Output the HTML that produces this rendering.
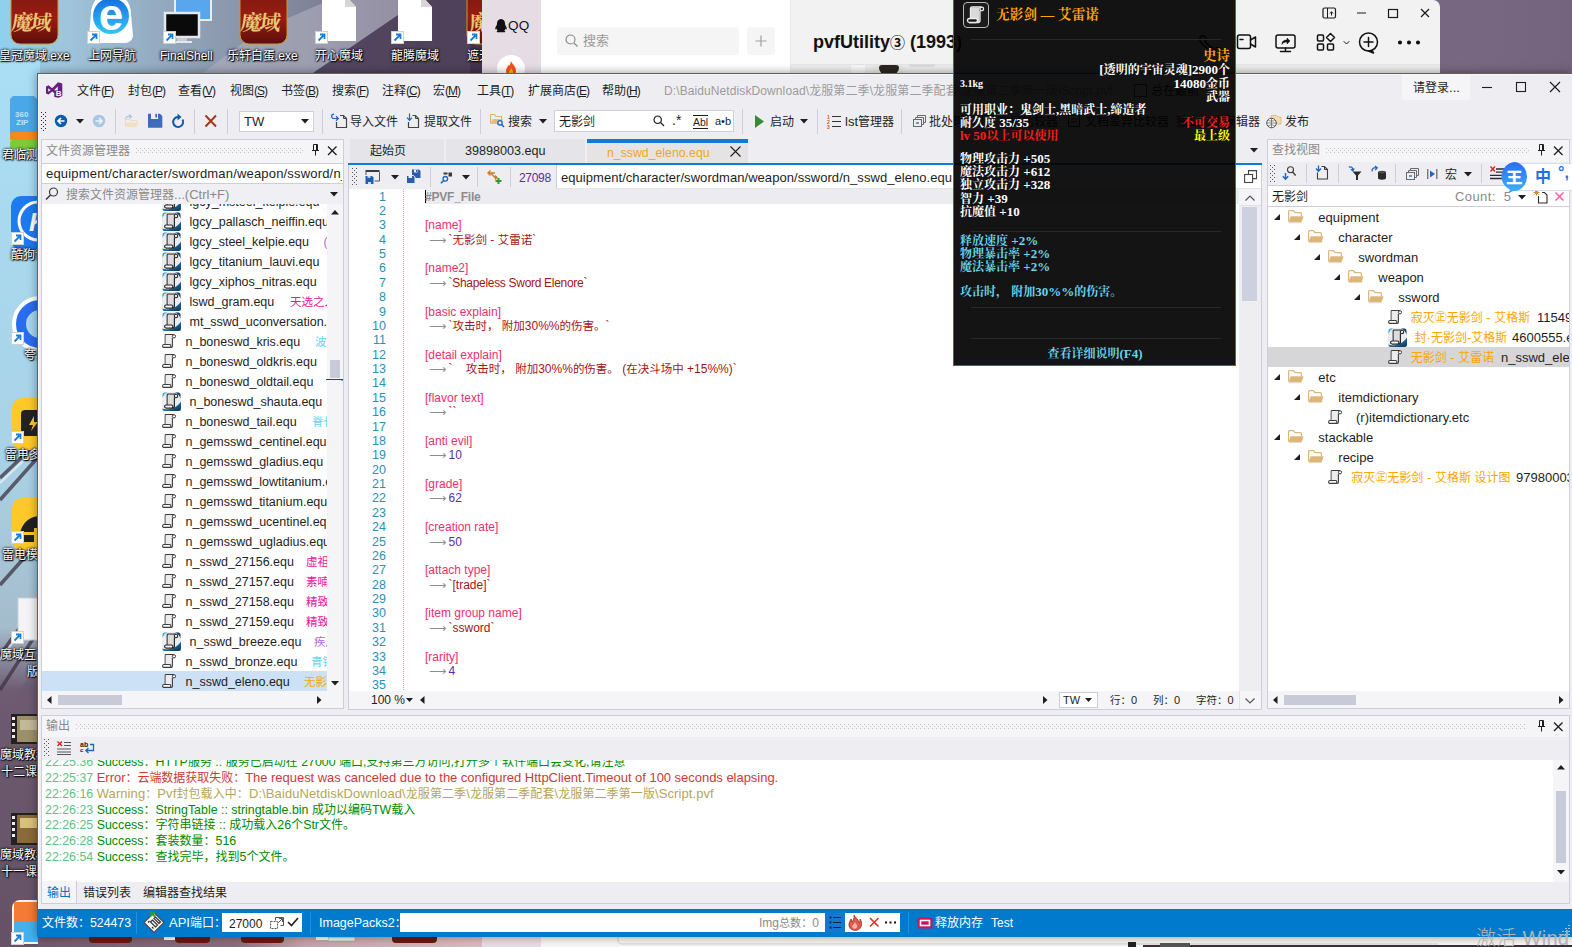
<!DOCTYPE html>
<html lang="zh-CN">
<head>
<meta charset="utf-8">
<title>pvfUtility</title>
<style>
*{box-sizing:border-box;margin:0;padding:0}
html,body{width:1572px;height:947px;overflow:hidden}
body{position:relative;font-family:"Liberation Sans","Noto Sans CJK SC",sans-serif;font-size:13px;color:#1e1e1e;background:#6b5a72;line-height:1}
.c{font-size:.9231em}
.k .c,.dl .c{font-size:1em}
.mk{font-size:12px;letter-spacing:-1px}
.a{position:absolute}
.t{position:absolute;white-space:pre;line-height:16px;height:16px}
svg{position:absolute;overflow:visible}
/* desktop */
#desk{position:absolute;left:0;top:0;width:1572px;height:947px;background:
 linear-gradient(90deg,#8fd0ee 0px,#9fc6dd 60px,#8f9fb4 200px,#7d7f93 330px,#5f4c63 470px,#4a3a52 700px,#6a5a74 1000px,#7d6c86 1300px,#75647e 1572px)}
.dl{position:absolute;color:#fff;font-size:12px;white-space:pre;text-shadow:1px 1px 1px #000,0 0 2px #000,0 0 3px #000;line-height:16px}
.sc{position:absolute;width:11px;height:11px;background:#fff;border:1px solid #d8d8d8}
.sc:after{content:"";position:absolute;left:2px;top:2px;width:5px;height:5px;border-top:2px solid #1a7fd8;border-right:2px solid #1a7fd8}
/* main window */
#win{position:absolute;left:38px;top:73px;width:1534px;height:864px;background:#eeeef2;border-top:1px solid #0078d7;border-left:1px solid #0078d7}
.sep{position:absolute;width:1px;height:22px;background:#ccceDB}
.pan{position:absolute;background:#f5f5f7;border:1px solid #ccceDB}
.ph{position:absolute;color:#8a8a8a;white-space:pre;line-height:16px}
.grip{position:absolute;height:5px;background:linear-gradient(90deg,#c2c4d0 1px,transparent 1px) 0 0/4px 1px repeat-x,linear-gradient(90deg,#c2c4d0 1px,transparent 1px) 2px 2px/4px 1px repeat-x,linear-gradient(90deg,#c2c4d0 1px,transparent 1px) 0 4px/4px 1px repeat-x}
.ar{color:#8c8c8c;padding:0 2.300px 0 4px;font-family:'DejaVu Sans',sans-serif;font-size:12px;line-height:0}
#ed .c{font-size:11.500px}
.c11 .c{font-size:10.500px}
#ltree .t{font-size:12.500px;margin-top:1px}
.lg{left:3px;font-size:12.400px}
.lg .c{font-size:12px}
.lg .bg{font-size:13px}
.lg i{font-style:normal;color:#62c084}
.w{color:#fff}
#tip .c{font-size:12px}
#tip .k .c{font-size:1em}
.tt{position:absolute;white-space:pre;line-height:16px;height:16px}
.tt.r{right:5px;text-align:right}
.hr{position:absolute;left:16px;width:250px;height:1px;background:#282828}
</style>
</head>
<body>
<div id="desk">
<!-- wallpaper accents -->
<svg width="1572" height="947" viewBox="0 0 1572 947" style="left:0;top:0">
 <defs>
  <linearGradient id="wl" x1="0" y1="0" x2="0" y2="1"><stop offset="0" stop-color="#a9def5"/><stop offset="0.45" stop-color="#a9d2e6"/><stop offset="0.64" stop-color="#a4bccc"/><stop offset="0.71" stop-color="#6f5c72"/><stop offset="1" stop-color="#5b4658"/></linearGradient>
  <linearGradient id="mo" x1="0" y1="0" x2="0" y2="1"><stop offset="0" stop-color="#7b1a10"/><stop offset="0.5" stop-color="#9c1c12"/><stop offset="1" stop-color="#5d0f0a"/></linearGradient>
  <symbol id="sct" viewBox="0 0 13 13"><rect x=".5" y=".5" width="12" height="12" fill="#fff" stroke="#d0d0d0" stroke-width="1"/><path d="M3.500 9.500L9 4M5 3.500h4.500V8" fill="none" stroke="#1a7fd8" stroke-width="1.800"/></symbol>
  <linearGradient id="ie" x1="0" y1="0" x2="0" y2="1"><stop offset="0" stop-color="#1470e0"/><stop offset="1" stop-color="#35c4f5"/></linearGradient>
 </defs>
 <rect x="0" y="60" width="40" height="887" fill="url(#wl)"/>
 <path d="M0 478L40 440M0 500L40 455M0 585L40 540M0 655L40 600M0 690L40 628" stroke="#3f3342" stroke-width="3.500" opacity=".75" fill="none"/><path d="M0 483L40 445M0 660L40 605" stroke="#f4f4f8" stroke-width="2" opacity=".7" fill="none"/>
 <path d="M0 720 L40 660 L40 947 L0 947Z" fill="#6c5a70" opacity=".6"/>
 <path d="M200 75 L260 30 L330 0 L470 0 L470 75Z" fill="#b5b3c2" opacity=".55"/>
 <path d="M310 75 L420 0 L482 0 L482 75Z" fill="#3b2a45" opacity=".75"/>
</svg>
<!-- top row icons -->
<svg width="50" height="44" style="left:10px;top:0"><rect x="1" y="-8" width="47" height="52" rx="9" fill="url(#mo)" stroke="#c79a2a" stroke-width="1"/><text x="24" y="30" font-size="21" font-weight="bold" fill="#e9c772" text-anchor="middle" font-family="'Liberation Serif','Noto Serif CJK SC',serif" transform="skewX(-8)" letter-spacing="-2">魔域</text></svg>
<svg width="50" height="44" style="left:239px;top:0"><rect x="1" y="-8" width="47" height="52" rx="9" fill="url(#mo)" stroke="#c79a2a" stroke-width="1"/><text x="24" y="30" font-size="21" font-weight="bold" fill="#e9c772" text-anchor="middle" font-family="'Liberation Serif','Noto Serif CJK SC',serif" transform="skewX(-8)" letter-spacing="-2">魔域</text></svg>
<svg width="20" height="44" style="left:466px;top:0"><rect x="1" y="-8" width="47" height="52" rx="9" fill="url(#mo)" stroke="#c79a2a" stroke-width="1"/><text x="14" y="30" font-size="21" font-weight="bold" fill="#e9c772" text-anchor="middle" font-family="'Liberation Serif','Noto Serif CJK SC',serif">魔</text></svg>
<svg width="48" height="44" style="left:87px;top:0"><path d="M4 14 A20 22 0 0 1 44 14 L46 36 A8 8 0 0 1 38 43 L10 43 A8 8 0 0 1 2 36Z" fill="#fff"/><circle cx="24" cy="16" r="18" fill="url(#ie)"/><text x="24" y="30" font-size="44" font-weight="bold" fill="#fff" text-anchor="middle" font-family="'Liberation Sans',sans-serif">e</text></svg>
<svg width="50" height="44" style="left:163px;top:0"><rect x="12" y="-6" width="36" height="26" fill="#5aa6ec" stroke="#e8eef5" stroke-width="2"/><rect x="26" y="20" width="10" height="4" fill="#cfd6de"/><rect x="2" y="13" width="34" height="24" fill="#0a0a0a" stroke="#e4e8ec" stroke-width="2.5"/><rect x="14" y="38" width="10" height="3" fill="#c8ced6"/><rect x="9" y="41" width="20" height="2" fill="#e4e8ec"/></svg>
<svg width="36" height="44" style="left:322px;top:0"><path d="M0 -5 L23 -5 L34 7 L34 41 L0 41Z" fill="#fff"/><path d="M23 -5 L23 7 L34 7Z" fill="#d6d6d6"/></svg>
<svg width="36" height="44" style="left:398px;top:0"><path d="M0 -5 L23 -5 L34 7 L34 41 L0 41Z" fill="#fff"/><path d="M23 -5 L23 7 L34 7Z" fill="#d6d6d6"/></svg>
<svg width="13" height="13" style="left:87px;top:31px"><use href="#sct"/></svg><svg width="13" height="13" style="left:163px;top:31px"><use href="#sct"/></svg><svg width="13" height="13" style="left:315px;top:31px"><use href="#sct"/></svg><svg width="13" height="13" style="left:391px;top:31px"><use href="#sct"/></svg><svg width="13" height="13" style="left:467px;top:31px"><use href="#sct"/></svg>
<div class="dl" style="left:-1px;top:48px"><span class="c">皇冠魔域</span>.exe</div>
<div class="dl" style="left:88px;top:48px"><span class="c">上网导航</span></div>
<div class="dl" style="left:160px;top:48px">FinalShell</div>
<div class="dl" style="left:227px;top:48px"><span class="c">乐轩白蛋</span>.exe</div>
<div class="dl" style="left:315px;top:48px"><span class="c">开心魔域</span></div>
<div class="dl" style="left:391px;top:48px"><span class="c">龍腾魔域</span></div>
<div class="dl" style="left:467px;top:48px"><span class="c">遮天</span></div>
<!-- left column icons -->
<svg width="30" height="56" style="left:10px;top:96px"><path d="M3 0 L24 0 L30 6 L30 40 L0 40 L0 3Z" fill="#4aa8e8"/><rect x="0" y="36" width="30" height="9" rx="3" fill="#f58a1e"/><rect x="0" y="44" width="30" height="9" rx="3" fill="#7ccb3a"/><text x="5" y="21" font-size="8" fill="#bfe3fa" font-family="'Liberation Sans',sans-serif" font-weight="bold">360</text><text x="6" y="29" font-size="8" fill="#bfe3fa" font-family="'Liberation Sans',sans-serif" font-weight="bold">ZIP</text></svg>
<div class="dl" style="left:2px;top:147px"><span class="c">君临测试</span></div>
<svg width="30" height="56" style="left:10px;top:196px"><rect x="1" y="0" width="40" height="54" rx="10" fill="#1e7af0"/><circle cx="28" cy="25" r="19" fill="none" stroke="#fff" stroke-width="3"/><text x="19" y="35" font-size="26" font-weight="bold" font-style="italic" fill="#fff" font-family="'Liberation Sans',sans-serif">K</text></svg>
<svg width="13" height="13" style="left:11px;top:232px"><use href="#sct"/></svg>
<div class="dl" style="left:11px;top:247px"><span class="c">酷狗音乐</span></div>
<svg width="30" height="56" style="left:10px;top:296px"><circle cx="30" cy="28" r="22" fill="none" stroke="#fff" stroke-width="12"/><circle cx="30" cy="28" r="19" fill="none" stroke="#2a6cf0" stroke-width="10"/></svg>
<svg width="13" height="13" style="left:11px;top:332px"><use href="#sct"/></svg>
<div class="dl" style="left:24px;top:347px"><span class="c">夸克</span></div>
<svg width="30" height="56" style="left:12px;top:398px"><rect x="0" y="0" width="50" height="52" rx="10" fill="#fdc82a"/><rect x="9" y="12" width="36" height="26" rx="4" fill="#222"/><path d="M22 18 L17 27 L21 27 L19 33 L26 24 L22 24Z" fill="#fdc82a"/></svg>
<svg width="13" height="13" style="left:11px;top:431px"><use href="#sct"/></svg>
<div class="dl" style="left:5px;top:447px"><span class="c">雷电多开器</span></div>
<svg width="30" height="56" style="left:12px;top:498px"><rect x="0" y="0" width="50" height="52" rx="10" fill="#fdc82a"/><path d="M8 38 A20 20 0 0 1 44 26 L44 44 L8 44Z" fill="#222"/><rect x="8" y="34" width="36" height="3" fill="#fdc82a"/><rect x="22" y="30" width="3" height="14" fill="#fdc82a"/></svg>
<svg width="13" height="13" style="left:11px;top:531px"><use href="#sct"/></svg>
<div class="dl" style="left:2px;top:547px"><span class="c">雷电模拟器</span></div>
<svg width="30" height="46" style="left:18px;top:598px"><rect x="0" y="0" width="30" height="42" fill="#f4f4f6" stroke="#d0d0d4"/></svg>
<svg width="13" height="13" style="left:11px;top:631px"><use href="#sct"/></svg>
<div class="dl" style="left:0px;top:647px"><span class="c">魔域互通</span></div>
<div class="dl" style="left:27px;top:664px"><span class="c">版</span></div>
<svg width="30" height="34" style="left:11px;top:714px"><rect x="0" y="0" width="30" height="30" fill="#222"/><rect x="6" y="2" width="24" height="26" fill="#9c8f6a"/><rect x="9" y="6" width="21" height="10" fill="#c2b89a"/><path d="M1 3h3v3h-3zM1 9h3v3h-3zM1 15h3v3h-3zM1 21h3v3h-3z" fill="#eee"/></svg>
<div class="dl" style="left:0px;top:747px"><span class="c">魔域教程</span></div>
<div class="dl" style="left:1px;top:764px"><span class="c">十二课</span></div>
<svg width="30" height="34" style="left:11px;top:813px"><rect x="0" y="0" width="30" height="32" fill="#222"/><rect x="6" y="2" width="24" height="28" fill="#8a6a3a"/><rect x="9" y="5" width="21" height="10" fill="#d8c27a"/><path d="M1 3h3v3h-3zM1 9h3v3h-3zM1 15h3v3h-3zM1 21h3v3h-3z" fill="#eee"/></svg>
<div class="dl" style="left:0px;top:847px"><span class="c">魔域教程</span></div>
<div class="dl" style="left:1px;top:864px"><span class="c">十一课</span></div>
<svg width="40" height="50" style="left:12px;top:900px"><rect x="0" y="0" width="44" height="44" rx="8" fill="#f4f4f4"/><rect x="2" y="2" width="30" height="20" fill="#f47b35"/><rect x="2" y="22" width="30" height="20" fill="#41b2ee"/><rect x="32" y="2" width="12" height="20" fill="#7cc142"/><rect x="32" y="22" width="12" height="20" fill="#f5c332"/></svg>
<svg width="13" height="13" style="left:11px;top:932px"><use href="#sct"/></svg>
<!-- strip below window -->
<svg width="1534" height="10" style="left:38px;top:937px"><defs><linearGradient id="sb" x1="0" y1="0" x2="1" y2="0"><stop offset="0" stop-color="#6f5a70"/><stop offset="0.45" stop-color="#8a6f80"/><stop offset="0.6" stop-color="#c3a3ac"/><stop offset="1" stop-color="#d9bcc2"/></linearGradient></defs><rect x="0" y="0" width="445" height="10" fill="url(#sb)"/><rect x="51" y="-4" width="43" height="10" rx="4" fill="#6a1818"/><rect x="137" y="-4" width="35" height="10" rx="4" fill="#6a1818"/><rect x="203" y="-4" width="43" height="10" rx="4" fill="#6a1818"/><rect x="290" y="0" width="27" height="4" fill="#f2f2f2" stroke="#999" stroke-width=".6"/><rect x="354" y="-4" width="45" height="10" rx="4" fill="#6a1818"/><rect x="126" y="0" width="11" height="3" fill="#fff"/><rect x="278" y="0" width="12" height="3" fill="#fff"/><rect x="444" y="0" width="59" height="10" fill="#e6dde4"/><rect x="503" y="0" width="1031" height="10" fill="#f6f6f6"/><path d="M580 0V3Q580 7 585 7H1400" fill="none" stroke="#d0d0d0" stroke-width="1"/><rect x="1105" y="8" width="429" height="2" fill="#3a3038"/><rect x="1090" y="5" width="8" height="5" fill="#222"/><rect x="1122" y="6" width="30" height="4" fill="#555"/></svg>
</div>
<!-- QQ window behind -->
<div class="a" id="qq" style="left:482px;top:0;width:958px;height:80px;background:#f2f2f2;border-top-right-radius:7px;overflow:hidden">
 <div class="a" style="left:0;top:0;width:59px;height:80px;background:#e6dde4"></div>
 <div class="a" style="left:59px;top:0;width:250px;height:80px;background:#fff;border-right:1px solid #e9e9e9"></div>
 <svg width="16" height="16" style="left:11px;top:18px" viewBox="0 0 16 16"><path d="M8 1C5.2 1 4 3.2 4 5.5c0 .8-.1 1.300-.5 2C2.600 9 2 10.200 2.300 11.300c.3.500.8-.1 1.200-.7.100.9.500 1.600 1.200 2.200-.6.200-1.100.6-1 1 .1.600 1.400.6 2.600.4.600.1 1.100.1 1.700.1s1.100 0 1.700-.1c1.200.2 2.500.2 2.600-.4.100-.4-.4-.8-1-1 .7-.6 1.100-1.300 1.200-2.200.4.600.9 1.200 1.200.7.300-1.100-.3-2.300-1.200-3.800-.4-.7-.5-1.200-.5-2C12 3.200 10.800 1 8 1z" fill="#111"/></svg>
 <div class="t" style="left:26px;top:18px;font-size:13.500px;color:#111;letter-spacing:.2px">QQ</div>
 <svg width="28" height="30" style="left:15px;top:55px"><circle cx="14" cy="14" r="14" fill="#fff"/><path d="M14 6c1 3 5 5 5 10a5 5 0 0 1-10 0c0-3 2-4 2-6 1 1 2 1 3-4z" fill="#f4511e"/><path d="M14 13c1 2 2.500 2.500 2.500 5a2.500 2.500 0 0 1-5 0c0-1.500 1.500-2 2.500-5z" fill="#ffb300"/></svg>
 <div class="a" style="left:75px;top:27px;width:182px;height:28px;background:#f5f5f5;border-radius:4px"></div>
 <svg width="14" height="14" style="left:83px;top:34px" viewBox="0 0 14 14"><circle cx="5.500" cy="5.500" r="4.500" fill="none" stroke="#8c8c8c" stroke-width="1.200"/><path d="M9 9l3.500 3.500" stroke="#8c8c8c" stroke-width="1.200"/></svg>
 <div class="t k" style="left:101px;top:33px;color:#9a9a9a;font-size:13px"><span class="c">搜索</span></div>
 <div class="a" style="left:265px;top:27px;width:28px;height:28px;background:#f5f5f5;border-radius:4px"></div>
 <svg width="12" height="12" style="left:273px;top:35px"><path d="M6 .5v11M.5 6h11" stroke="#a0a0a0" stroke-width="1.200"/></svg>
 <div class="t" style="left:331px;top:31px;font-size:18px;font-weight:bold;color:#111;line-height:22px;height:22px;letter-spacing:0">pvfUtility<span style="font-size:15px">③</span> (1993)</div>
 <div class="a" style="left:309px;top:64px;width:649px;height:1px;background:#e6e6e6"></div>
 <div class="a" style="left:309px;top:65px;width:649px;height:15px;background:#ededed"></div>
 <div class="a" style="left:369px;top:65px;width:14px;height:10px;background:#f8f8f8"></div>
 <div class="a" style="left:391px;top:65px;width:30px;height:10px;background:#e6ece4"></div>
 <div class="a" style="left:397px;top:65px;width:20px;height:9px;background:#2a2622;border-radius:3px 3px 6px 6px"></div>
 <div class="a" style="left:427px;top:64px;width:26px;height:3px;background:#dcdcdc;border-radius:0 0 3px 3px"></div>
 <!-- window controls -->
 <svg width="120" height="20" style="left:838px;top:4px" fill="none" stroke="#1a1a1a" stroke-width="1.200"><rect x="3" y="4" width="12.500" height="10" rx="1.500"/><path d="M7.500 4v10M11.500 11.500v-3.500m-1.500 1.500l1.500-1.800 1.500 1.800" stroke-width="1"/><path d="M37 9h9"/><rect x="68.500" y="5.500" width="9" height="8"/><path d="M101 5l8 8M109 5l-8 8"/></svg>
 <svg width="30" height="20" style="left:716px;top:34px" viewBox="0 0 30 20" fill="none" stroke="#111" stroke-width="1.500"><path d="M2 3.500c2-3 4-2 6 .5 1 1.500 0 2.500-1 3.500 2.500 3.500 6 6 10 8 1-1.500 2-2.500 4-1.500 3 1.500 4 3 2 5-3 1.500-8-.5-13-4S.5 7 2 3.500z"/></svg>
 <!-- chat toolbar icons -->
 <svg width="200" height="24" style="left:742px;top:31px" fill="none" stroke="#111" stroke-width="1.500" stroke-linejoin="round" stroke-linecap="round"><rect x="13.500" y="4" width="13" height="13.500" rx="2"/><path d="M26.500 9l5-3v10l-5-3M16 8.500h3"/><rect x="52" y="4" width="19" height="13" rx="2"/><path d="M61.500 17v3.500M56.500 20.500h10M58 13c0-3 2-4 5-4v-2l3 3-3 3v-2c-2 0-3.500.5-5 2z" fill="#111" stroke-width=".5"/><path d="M61.500 17v3.500M56.500 20.500h10"/><rect x="93.500" y="4" width="6" height="6" rx="1"/><rect x="93.500" y="13" width="6" height="6" rx="1"/><rect x="103.500" y="13" width="6" height="6" rx="1"/><path d="M106.500 2.500l4 4-4 4-4-4z"/><path d="M120 10.500l2.500 2.500 2.500-2.500" stroke-width="1"/><circle cx="144.500" cy="11" r="9"/><path d="M144.500 6.500v9M140 11h9M148 19.500l1.500 2.500-5-2" /><circle cx="176" cy="11.500" r="1.300" fill="#111"/><circle cx="185" cy="11.500" r="1.300" fill="#111"/><circle cx="194" cy="11.500" r="1.300" fill="#111"/></svg>
</div>
<!-- main window -->
<div class="a" style="left:37px;top:73px;width:1535px;height:864px;background:#eeeef2;box-shadow:0 0 9px rgba(0,0,0,.4)"></div>
<div class="a" style="left:38px;top:74px;width:1534px;height:1px;background:#fbf6f6"></div>
<div class="a" style="left:38px;top:74px;width:1px;height:835px;background:#fbf6f6"></div>
<div class="a" style="left:37px;top:73px;width:1535px;height:1px;background:#0878cf"></div>
<div class="a" style="left:37px;top:73px;width:1px;height:864px;background:#0878cf"></div>
<!-- logo -->
<svg width="17" height="16" style="left:46px;top:82px" viewBox="0 0 17 16"><path d="M0 4.500L2.500 3.200 6.200 6.300 12 .3 16.300 1.600V14L12.500 15.700 8.300 15V11.300L6.200 9.600 2.500 12.600 0 11.400zM2.200 6.200v3.600L4.700 8zM11.800 4.400L8.200 8l1.300.6 2.300-.4z" fill="#68217a" fill-rule="evenodd"/><text x="9.700" y="14.300" font-size="8" font-weight="bold" fill="#fff" font-family="'Liberation Sans',sans-serif">B</text></svg>
<!-- menu -->
<div class="t" style="left:77px;top:83px"><span class="c">文件</span><span class="mk">(<u>F</u>)</span></div>
<div class="t" style="left:128px;top:83px"><span class="c">封包</span><span class="mk">(<u>P</u>)</span></div>
<div class="t" style="left:178px;top:83px"><span class="c">查看</span><span class="mk">(<u>V</u>)</span></div>
<div class="t" style="left:230px;top:83px"><span class="c">视图</span><span class="mk">(<u>S</u>)</span></div>
<div class="t" style="left:281px;top:83px"><span class="c">书签</span><span class="mk">(<u>B</u>)</span></div>
<div class="t" style="left:332px;top:83px"><span class="c">搜索</span><span class="mk">(<u>F</u>)</span></div>
<div class="t" style="left:382px;top:83px"><span class="c">注释</span><span class="mk">(<u>C</u>)</span></div>
<div class="t" style="left:433px;top:83px"><span class="c">宏</span><span class="mk">(<u>M</u>)</span></div>
<div class="t" style="left:477px;top:83px"><span class="c">工具</span><span class="mk">(<u>T</u>)</span></div>
<div class="t" style="left:528px;top:83px"><span class="c">扩展商店</span><span class="mk">(<u>E</u>)</span></div>
<div class="t" style="left:602px;top:83px"><span class="c">帮助</span><span class="mk">(<u>H</u>)</span></div>
<div class="t k" style="left:664px;top:83px;color:#9b9b9b;font-size:12px;letter-spacing:.1px">D:\BaiduNetdiskDownload\<span class="c">龙服第二季</span>\<span class="c">龙服第二季配套</span>\<span class="c">龙服第二季第一版</span>\Script.pvf</div>
<div class="a" style="left:1134px;top:84px;width:13px;height:13px;border:1px solid #555;background:#fff"></div>
<div class="t" style="left:1151px;top:83px"><span class="c">总在最前</span></div>
<div class="a" style="left:1402px;top:75px;width:68px;height:25px;background:#f5f5f7"></div>
<div class="t" style="left:1413px;top:80px"><span class="c">请登录</span>...</div>
<svg width="90" height="14" style="left:1480px;top:80px" fill="none" stroke="#1e1e1e" stroke-width="1.100"><path d="M2 7.500h10"/><rect x="36.500" y="2.500" width="9" height="9"/><path d="M70 2l10 10M80 2l-10 10" stroke-width="1.200"/></svg>
<!-- toolbar -->
<svg width="6" height="20" style="left:41px;top:112px"><path d="M0 .5h1M0 4.500h1M0 8.500h1M0 12.500h1M0 16.500h1M2 2.500h1M2 6.500h1M2 10.500h1M2 14.500h1M2 18.500h1M4 .5h1M4 4.500h1M4 8.500h1M4 12.500h1M4 16.500h1" stroke="#222" stroke-width="1"/></svg>
<svg width="14" height="14" style="left:54px;top:114px" viewBox="0 0 14 14"><circle cx="7" cy="7" r="6.200" fill="#0f5bac"/><path d="M10.500 7H4.300M7 4L4 7l3 3" fill="none" stroke="#fff" stroke-width="1.700"/></svg>
<svg width="8" height="5" style="left:76px;top:119px"><path d="M0 0h8L4 4.500z" fill="#1e1e1e"/></svg>
<svg width="14" height="14" style="left:92px;top:114px" viewBox="0 0 14 14"><circle cx="7" cy="7" r="6.200" fill="#aac6e2"/><path d="M3.500 7h6.200M7 4l3 3-3 3" fill="none" stroke="#eef3f8" stroke-width="1.700"/></svg>
<div class="sep" style="left:115px;top:109px;height:25px"></div>
<svg width="16" height="16" style="left:124px;top:113px" viewBox="0 0 16 16"><path d="M1.500 13V6.500H5.500L6.500 7.500H13V9" fill="none" stroke="#f0dcc0" stroke-width="1"/><path d="M3 9.500H14.500L12.500 14H1z" fill="#f1dfc6"/><path d="M2 6.500C1 4.500 3 3 6.500 3.500M5 1.500L7.500 3.500 5.500 5.800" fill="none" stroke="#a9c3e2" stroke-width="1.100"/></svg>
<svg width="15" height="15" style="left:148px;top:113px" viewBox="0 0 15 15"><path d="M0 .8H3V6H10V.8H12L14.300 3V14.800H0z" fill="#3d6db9"/><rect x="7.300" y=".8" width="1.700" height="3.700" fill="#3d6db9"/></svg>
<svg width="14" height="15" style="left:171px;top:113px" viewBox="0 0 14 15"><path d="M11.500 6.500A5 5 0 1 1 7 4" fill="none" stroke="#1458a8" stroke-width="2"/><path d="M6.500 .5L10.500 4 6.500 7.500z" fill="#1458a8"/></svg>
<div class="sep" style="left:194px;top:109px;height:25px"></div>
<svg width="14" height="14" style="left:204px;top:114px"><path d="M1.500 1.500l10.500 11M12 1.500L1.500 12.500" stroke="#a8321a" stroke-width="1.900" fill="none"/></svg>
<div class="sep" style="left:227px;top:109px;height:25px"></div>
<div class="a" style="left:239px;top:111px;width:75px;height:21px;background:#fff;border:1px solid #ccceDB"></div>
<div class="t" style="left:244px;top:114px">TW</div>
<svg width="8" height="5" style="left:301px;top:119px"><path d="M0 0h8L4 4.500z" fill="#1e1e1e"/></svg>
<div class="sep" style="left:322px;top:109px;height:25px"></div>
<svg width="18" height="16" style="left:330px;top:113px" viewBox="0 0 18 16" fill="none"><path d="M6.500 9V14.500H16.500V5.500L13.500 2.500H10" stroke="#444" stroke-width="1.200"/><path d="M13.500 2.500V5.500H16.500" stroke="#444" stroke-width="1"/><path d="M4 1.200C.8 1.200.8 5.500 4 5.500H8M6 3.300L8.300 5.500 6 7.700" stroke="#1f65c0" stroke-width="1.200"/></svg>
<div class="t" style="left:350px;top:114px"><span class="c">导入文件</span></div>
<svg width="15" height="16" style="left:406px;top:113px" viewBox="0 0 15 16" fill="none"><path d="M2.500 9V14.500H12.500V5.500L9.500 2.500H6.500" stroke="#444" stroke-width="1.200"/><path d="M9.500 2.500V5.500H12.500" stroke="#444" stroke-width="1"/><path d="M3.500 .5V7M1 4.700L3.500 7.300 6 4.700" stroke="#1f65c0" stroke-width="1.200"/></svg>
<div class="t" style="left:424px;top:114px"><span class="c">提取文件</span></div>
<div class="sep" style="left:480px;top:109px;height:25px"></div>
<svg width="16" height="15" style="left:489px;top:113px" viewBox="0 0 16 15"><path d="M1.500 10.500V1.500H5.500L7 3.500H12.500V6" fill="none" stroke="#e0b36a" stroke-width="1.100"/><path d="M3.500 6H14L11.500 11H1.300z" fill="#e6bf80"/><circle cx="11" cy="9.800" r="2.200" fill="#eeeef2" stroke="#1f65c0" stroke-width="1.300"/><path d="M12.600 11.500L15 14" stroke="#1f65c0" stroke-width="1.600"/></svg>
<div class="t" style="left:508px;top:114px"><span class="c">搜索</span></div>
<svg width="8" height="5" style="left:539px;top:119px"><path d="M0 0h8L4 4.500z" fill="#1e1e1e"/></svg>
<div class="a" style="left:554px;top:110px;width:180px;height:22px;background:#fff;border:1px solid #ccceDB"></div>
<div class="t" style="left:559px;top:114px"><span class="c">无影剑</span></div>
<svg width="12" height="12" style="left:653px;top:115px" fill="none" stroke="#1e1e1e" stroke-width="1.200"><circle cx="4.700" cy="4.700" r="3.700"/><path d="M7.500 7.500l3.500 3.500"/></svg>
<div class="t" style="left:672px;top:112px;font-size:14px">.*</div>
<div class="t" style="left:693px;top:114px;font-size:10.500px;border-top:1px solid #1e1e1e;border-bottom:1px solid #1e1e1e;line-height:12px;height:14px;top:115px">Abl</div>
<div class="t" style="left:715px;top:113px;font-size:11px">a•b</div>
<div class="sep" style="left:742px;top:109px;height:25px"></div>
<svg width="9" height="13" style="left:755px;top:115px"><path d="M0 0l9 6.500L0 13z" fill="#388a34"/></svg>
<div class="t" style="left:770px;top:114px"><span class="c">启动</span></div>
<svg width="8" height="5" style="left:800px;top:119px"><path d="M0 0h8L4 4.500z" fill="#1e1e1e"/></svg>
<div class="sep" style="left:817px;top:109px;height:25px"></div>
<svg width="15" height="15" style="left:827px;top:114px"><text x="0" y="4.500" font-size="5" font-weight="bold" fill="#d9532c" font-family="'Liberation Sans',sans-serif">1</text><text x="0" y="9.500" font-size="5" font-weight="bold" fill="#d9532c" font-family="'Liberation Sans',sans-serif">2</text><text x="0" y="14.500" font-size="5" font-weight="bold" fill="#d9532c" font-family="'Liberation Sans',sans-serif">3</text><path d="M5 2.500h9M5 7.500h9M5 12.500h9" stroke="#333" stroke-width="1"/></svg>
<div class="t" style="left:845px;top:114px">lst<span class="c">管理器</span></div>
<div class="sep" style="left:901px;top:109px;height:25px"></div>
<svg width="13" height="12" style="left:913px;top:115px" fill="none" stroke="#6a6a6a" stroke-width="1"><path d="M4.500 2.500V.5h8v7h-2M2.500 4.500V2.500h8v7h-2"/><rect x=".5" y="4.500" width="8" height="7" fill="#eeeef2"/><path d="M3 8h3" stroke="#1f65c0" stroke-width="1.300"/></svg>
<div class="t" style="left:929px;top:114px"><span class="c">批处理</span></div>
<svg width="13" height="12" style="left:982px;top:115px" fill="none" stroke="#333" stroke-width="1"><rect x=".5" y=".5" width="11" height="11"/></svg>
<div class="t" style="left:998px;top:114px"><span class="c">文档比较器</span></div>
<svg width="13" height="12" style="left:1068px;top:115px" fill="none" stroke="#333" stroke-width="1"><rect x=".5" y=".5" width="11" height="11"/><path d="M3 4h6M3 7h6"/></svg>
<div class="t" style="left:1085px;top:114px"><span class="c">文档差异比较器</span></div>
<div class="t" style="left:1176px;top:114px"><span class="c">独立文本编辑器</span></div>
<svg width="16" height="15" style="left:1266px;top:114px" viewBox="0 0 16 15"><path d="M5 1.500h5.500L12 3h3v7H5z" fill="#f3dcb4" stroke="#d9b777" stroke-width=".8"/><circle cx="5.500" cy="9" r="4.800" fill="#fff" stroke="#555" stroke-width="1"/><path d="M.7 9h9.600M5.500 4.200v9.600M2 6c2 1.500 5 1.500 7 0M2 12c2-1.500 5-1.500 7 0" fill="none" stroke="#555" stroke-width=".7"/></svg>
<div class="t" style="left:1285px;top:114px"><span class="c">发布</span></div>
<!-- left panel : file explorer -->
<svg width="0" height="0" style="left:0;top:0"><defs>
<symbol id="scr" viewBox="0 0 14 14"><path d="M3.200 10.600V1.400Q3.200 .6 4 .6H11.800" fill="none" stroke="#3c3c3c" stroke-width="1.100"/><path d="M3.700 1.100H10.400V12.300Q10.400 13.400 9.300 13.400H3.700z" fill="#ececef"/><path d="M10.400 3.800V12.300Q10.400 13.400 9.300 13.400H2" fill="none" stroke="#3c3c3c" stroke-width="1.100"/><circle cx="12" cy="2.300" r="1.600" fill="#fff" stroke="#3c3c3c" stroke-width="1"/><rect x=".6" y="10.500" width="8.300" height="2.900" rx="1.400" fill="#fff" stroke="#3c3c3c" stroke-width="1.100"/></symbol>
<linearGradient id="bg1" x1="0" y1="0" x2="1" y2="1"><stop offset="0" stop-color="#7fd4ec"/><stop offset="0.5" stop-color="#1d6fa8"/><stop offset="1" stop-color="#0c2f52"/></linearGradient>
<symbol id="scb" viewBox="0 0 19 19"><rect x="0" y="0" width="19" height="19" rx="2.500" fill="#ececee"/><path d="M19 9.500V16.500Q19 19 16.500 19H2.500Q.6 19 .3 16.500C5 18.500 14 17 19 9.500z" fill="url(#bg1)"/><path d="M.5 6V3Q.5 .5 3 .5H5.500C3 1.500 1.500 3 .5 6z" fill="#3aa3cf"/><path d="M13 .5H16.500Q18.500 .5 18.500 3V6.500C17.500 3.500 16 1.500 13 .5z" fill="#143d63"/><circle cx="2.800" cy="2.800" r="1" fill="#aeeaf8"/><path d="M5.200 13.300V3Q5.200 2.200 6 2.200H14" fill="none" stroke="#2a2a2a" stroke-width="1.200"/><path d="M5.800 2.800H12.300V14.500Q12.300 15.800 11 15.800H5.800z" fill="#dcdce0"/><path d="M12.400 5.500V14.600Q12.400 15.900 11.200 15.900H4" fill="none" stroke="#2a2a2a" stroke-width="1.200"/><circle cx="14" cy="4" r="1.700" fill="#f4f4f6" stroke="#2a2a2a" stroke-width="1.100"/><rect x="2.600" y="13" width="8.300" height="3" rx="1.500" fill="#f4f4f6" stroke="#2a2a2a" stroke-width="1.200"/></symbol>
</defs></svg>
<div class="pan" style="left:41px;top:139px;width:303px;height:570px"></div>
<div class="ph" style="left:46px;top:143px"><span class="c">文件资源管理器</span></div>
<div class="grip" style="left:136px;top:148px;width:167px"></div>
<svg width="8" height="12" style="left:312px;top:144px" fill="none" stroke="#1e1e1e" stroke-width="1"><path d="M1.500 .5h4v6h-4zM4.500 .5v6M0 6.500h7M3.500 6.500v5" /></svg>
<svg width="11" height="11" style="left:327px;top:145px" fill="none" stroke="#1e1e1e" stroke-width="1.300"><path d="M1 1.500l8.500 8.500M9.500 1.500l-8.500 8.500"/></svg>
<div class="a" style="left:42px;top:163px;width:301px;height:21px;background:#fff;border:1px solid #ccceDB;border-left:0;border-right:0"></div>
<div class="t" style="left:46px;top:166px;width:296px;overflow:hidden;letter-spacing:.18px">equipment/character/swordman/weapon/ssword/n_sswd_eleno.equ</div>
<div class="a" style="left:42px;top:184px;width:301px;height:20px;background:#f0f0f4"></div>
<svg width="14" height="14" style="left:45px;top:187px" fill="none" stroke="#3c3c3c" stroke-width="1.200"><circle cx="8.500" cy="5" r="4"/><path d="M5.500 8L1 12.500" stroke-width="1.600"/></svg>
<div class="t" style="left:66px;top:187px;color:#8a8a8a"><span class="c">搜索文件资源管理器</span>...(Ctrl+F)</div>
<svg width="8" height="5" style="left:330px;top:192px"><path d="M0 0h8L4 4.500z" fill="#1e1e1e"/></svg>
<div class="a" id="ltree" style="left:42px;top:204px;width:285px;height:487px;background:#fff;overflow:hidden">
<svg width="19" height="19" style="left:119.5px;top:-12.5px"><use href="#scb"/></svg><div class="t" style="left:147.5px;top:-11px">lgcy_msteel_kelpie.equ</div>
<svg width="19" height="19" style="left:119.5px;top:7.5px"><use href="#scb"/></svg><div class="t" style="left:147.5px;top:9px">lgcy_pallasch_neiffin.equ</div>
<svg width="19" height="19" style="left:119.5px;top:27.5px"><use href="#scb"/></svg><div class="t" style="left:147.5px;top:29px">lgcy_steel_kelpie.equ</div><div class="t" style="left:281.500px;top:29px;color:#b36ae2;background:#fff">(</div>
<svg width="19" height="19" style="left:119.5px;top:47.5px"><use href="#scb"/></svg><div class="t" style="left:147.5px;top:49px">lgcy_titanium_lauvi.equ</div>
<svg width="19" height="19" style="left:119.5px;top:67.5px"><use href="#scb"/></svg><div class="t" style="left:147.5px;top:69px">lgcy_xiphos_nitras.equ</div>
<svg width="19" height="19" style="left:119.5px;top:87.5px"><use href="#scb"/></svg><div class="t" style="left:147.5px;top:89px">lswd_gram.equ</div><div class="t" style="left:248px;top:89px;color:#e6169b;background:#fff"><span class="c">天选之人</span></div>
<svg width="19" height="19" style="left:119.5px;top:107.5px"><use href="#scb"/></svg><div class="t" style="left:147.5px;top:109px">mt_sswd_uconversation.equ</div>
<svg width="14" height="14" style="left:120px;top:130px"><use href="#scr"/></svg><div class="t" style="left:143.5px;top:129px">n_boneswd_kris.equ</div><div class="t" style="left:273px;top:129px;color:#68d5ed;background:#fff"><span class="c">波纹</span></div>
<svg width="14" height="14" style="left:120px;top:150px"><use href="#scr"/></svg><div class="t" style="left:143.5px;top:149px">n_boneswd_oldkris.equ</div>
<svg width="14" height="14" style="left:120px;top:170px"><use href="#scr"/></svg><div class="t" style="left:143.5px;top:169px">n_boneswd_oldtail.equ</div>
<svg width="19" height="19" style="left:119.5px;top:187.5px"><use href="#scb"/></svg><div class="t" style="left:147.5px;top:189px">n_boneswd_shauta.equ</div>
<svg width="14" height="14" style="left:120px;top:210px"><use href="#scr"/></svg><div class="t" style="left:143.5px;top:209px">n_boneswd_tail.equ</div><div class="t" style="left:270px;top:209px;color:#68d5ed;background:#fff"><span class="c">脊骨</span></div>
<svg width="14" height="14" style="left:120px;top:230px"><use href="#scr"/></svg><div class="t" style="left:143.5px;top:229px">n_gemsswd_centinel.equ</div>
<svg width="14" height="14" style="left:120px;top:250px"><use href="#scr"/></svg><div class="t" style="left:143.5px;top:249px">n_gemsswd_gladius.equ</div>
<svg width="14" height="14" style="left:120px;top:270px"><use href="#scr"/></svg><div class="t" style="left:143.5px;top:269px">n_gemsswd_lowtitanium.equ</div>
<svg width="14" height="14" style="left:120px;top:290px"><use href="#scr"/></svg><div class="t" style="left:143.5px;top:289px">n_gemsswd_titanium.equ</div>
<svg width="14" height="14" style="left:120px;top:310px"><use href="#scr"/></svg><div class="t" style="left:143.5px;top:309px">n_gemsswd_ucentinel.equ</div>
<svg width="14" height="14" style="left:120px;top:330px"><use href="#scr"/></svg><div class="t" style="left:143.5px;top:329px">n_gemsswd_ugladius.equ</div>
<svg width="14" height="14" style="left:120px;top:350px"><use href="#scr"/></svg><div class="t" style="left:143.5px;top:349px">n_sswd_27156.equ</div><div class="t" style="left:264px;top:349px;color:#e6169b;background:#fff"><span class="c">虚祖</span></div>
<svg width="14" height="14" style="left:120px;top:370px"><use href="#scr"/></svg><div class="t" style="left:143.5px;top:369px">n_sswd_27157.equ</div><div class="t" style="left:264px;top:369px;color:#e6169b;background:#fff"><span class="c">素喃</span></div>
<svg width="14" height="14" style="left:120px;top:390px"><use href="#scr"/></svg><div class="t" style="left:143.5px;top:389px">n_sswd_27158.equ</div><div class="t" style="left:264px;top:389px;color:#e6169b;background:#fff"><span class="c">精致</span></div>
<svg width="14" height="14" style="left:120px;top:410px"><use href="#scr"/></svg><div class="t" style="left:143.5px;top:409px">n_sswd_27159.equ</div><div class="t" style="left:264px;top:409px;color:#e6169b;background:#fff"><span class="c">精致</span></div>
<svg width="19" height="19" style="left:119.5px;top:427.5px"><use href="#scb"/></svg><div class="t" style="left:147.5px;top:429px">n_sswd_breeze.equ</div><div class="t" style="left:272px;top:429px;color:#b36ae2;background:#fff"><span class="c">疾风</span></div>
<svg width="14" height="14" style="left:120px;top:450px"><use href="#scr"/></svg><div class="t" style="left:143.5px;top:449px">n_sswd_bronze.equ</div><div class="t" style="left:269px;top:449px;color:#68d5ed;background:#fff"><span class="c">青铜</span></div>
<div class="a" style="left:0;top:467px;width:285px;height:20px;background:#cce0f6"></div>
<svg width="14" height="14" style="left:120px;top:470px"><use href="#scr"/></svg><div class="t" style="left:143.5px;top:469px">n_sswd_eleno.equ</div><div class="t" style="left:262px;top:469px;color:#ffa500;background:#cce0f6"><span class="c">无影剑</span></div>
</div>
<!-- left vscroll -->
<div class="a" style="left:327px;top:204px;width:16px;height:487px;background:#f5f5f7"></div>
<svg width="8" height="5" style="left:331px;top:210px"><path d="M0 4.500h8L4 0z" fill="#1e1e1e"/></svg>
<svg width="8" height="5" style="left:331px;top:681px"><path d="M0 0h8L4 4.500z" fill="#1e1e1e"/></svg>
<div class="a" style="left:330px;top:360px;width:10px;height:18px;background:#c8cad8"></div>
<div class="a" style="left:326px;top:379px;width:17px;height:1px;background:#a31515"></div>
<div class="a" style="left:341px;top:380px;width:2px;height:1px;background:#6aa8f0"></div>
<!-- left hscroll -->
<div class="a" style="left:42px;top:691px;width:301px;height:17px;background:#f5f5f7"></div>
<svg width="5" height="8" style="left:47px;top:696px"><path d="M4.500 0v8L0 4z" fill="#1e1e1e"/></svg>
<svg width="5" height="8" style="left:317px;top:696px"><path d="M0 0v8L4.500 4z" fill="#1e1e1e"/></svg>
<div class="a" style="left:58px;top:695px;width:64px;height:10px;background:#c8cad8"></div>
<!-- editor area -->
<div class="a" style="left:350px;top:139px;width:94px;height:24px;background:#e4e4e9"></div>
<div class="t" style="left:370px;top:143px"><span class="c">起始页</span></div>
<div class="a" style="left:446px;top:139px;width:139px;height:24px;background:#e4e4e9"></div>
<div class="t" style="left:465px;top:143px;font-size:12.600px">39898003.equ</div>
<div class="a" style="left:587px;top:139px;width:161px;height:24px;background:#e6e3e4;border-top:4px solid #0f7bd8"></div>
<div class="t" style="left:607px;top:145px;color:#f5a31f;font-size:12.300px">n_sswd_eleno.equ</div>
<svg width="11" height="11" style="left:730px;top:146px" fill="none" stroke="#1e1e1e" stroke-width="1.100"><path d="M.5 .5l10 10M10.500 .5l-10 10"/></svg>
<svg width="8" height="5" style="left:1250px;top:148px"><path d="M0 0h8L4 4.500z" fill="#1e1e1e"/></svg>
<div class="a" style="left:348px;top:163px;width:914px;height:2px;background:#0f7bd8"></div>
<div class="a" style="left:348px;top:165px;width:1px;height:544px;background:#ccceDB"></div>
<div class="a" style="left:1261px;top:165px;width:1px;height:544px;background:#ccceDB"></div>
<div class="a" style="left:348px;top:709px;width:914px;height:1px;background:#ccceDB"></div>
<!-- editor toolbar -->
<svg width="6" height="18" style="left:352px;top:168px"><path d="M0 .5h1M0 4.500h1M0 8.500h1M0 12.500h1M0 16.500h1M2 2.500h1M2 6.500h1M2 10.500h1M2 14.500h1M4 .5h1M4 4.500h1M4 8.500h1M4 12.500h1M4 16.500h1" stroke="#555" stroke-width="1"/></svg>
<svg width="16" height="15" style="left:365px;top:169px" viewBox="0 0 16 15"><path d="M.5 2H14.500" stroke="#3c3c3c" stroke-width="2"/><path d="M1 3V6M14.500 3V12H9.500" fill="none" stroke="#555" stroke-width="1"/><path d="M.5 7H7L8.500 8.500V15H.5z" fill="#1f5fae"/><rect x="2.500" y="7" width="3" height="1.800" fill="#cfdcee"/><rect x="3" y="13" width="3" height="2" fill="#cfdcee"/></svg>
<svg width="8" height="5" style="left:391px;top:175px"><path d="M0 0h8L4 4.500z" fill="#1e1e1e"/></svg>
<svg width="16" height="15" style="left:406px;top:169px" viewBox="0 0 16 15"><path d="M6 .5h7l1.500 1.500v7H6z" fill="#2a5db0"/><rect x="8" y=".5" width="3.500" height="3" fill="#eeeef2"/><rect x="10" y="1" width="1" height="2" fill="#2a5db0"/><path d="M.5 6.500h7l1.500 1.500v6.500H.5z" fill="#2a5db0" stroke="#eeeef2" stroke-width="1"/><rect x="2.500" y="6.500" width="3.500" height="2.500" fill="#eeeef2"/></svg>
<div class="sep" style="left:430px;top:167px;height:20px"></div>
<svg width="13" height="14" style="left:440px;top:170px" viewBox="0 0 13 14"><path d="M3.500 2.500H7.500V4.500H3.500zM8.500 2.500H12V6.500H8.500z" fill="#3a3a3a"/><circle cx="5.300" cy="8.800" r="2.300" fill="#eeeef2" stroke="#1f65c0" stroke-width="1.300"/><path d="M3.600 10.600L.8 13.300" stroke="#1f65c0" stroke-width="1.500"/></svg>
<svg width="8" height="5" style="left:462px;top:175px"><path d="M0 0h8L4 4.500z" fill="#1e1e1e"/></svg>
<div class="sep" style="left:477px;top:167px;height:20px"></div>
<svg width="17" height="16" style="left:486px;top:169px" viewBox="0 0 17 16"><path d="M2 4H9M4.500 1.500L2 4 4.500 6.500M4.500 4L9 8.500H11M9 6.500L11 8.500 9 10.500" fill="none" stroke="#c9811f" stroke-width="1.400"/><path d="M12.500 9V15M9.500 12H15.500" stroke="#2f9a35" stroke-width="2"/></svg>
<div class="sep" style="left:510px;top:167px;height:20px"></div>
<div class="t" style="left:519px;top:170px;color:#5b2da8;font-size:12px;letter-spacing:-.3px">27098</div>
<div class="a" style="left:556px;top:165px;width:705px;height:24px;background:#fff;border-left:1px solid #ccceDB;border-bottom:1px solid #e4e4ea"></div>
<div class="t" style="left:561px;top:170px;letter-spacing:.05px">equipment/character/swordman/weapon/ssword/n_sswd_eleno.equ</div>
<svg width="13" height="13" style="left:1244px;top:170px" fill="none" stroke="#444" stroke-width="1.100"><path d="M4.500 4.500V.6h8v8H8.500"/><rect x=".6" y="4.500" width="8" height="8"/></svg>
<!-- editor body -->
<div class="a" style="left:349px;top:189px;width:890px;height:502px;background:#fff"></div>
<div class="a" style="left:425px;top:189px;width:814px;height:15px;background:#ececf0"></div>
<div class="a" style="left:425px;top:190px;width:1px;height:13px;background:#000"></div>
<div class="a" style="left:403px;top:189px;width:1px;height:502px;background-image:linear-gradient(180deg,#7fbfd6 1px,transparent 1px);background-size:1px 2px"></div>
<div class="a" id="ed" style="left:349px;top:189px;width:890px;height:502px;overflow:hidden;font-size:12px;line-height:14.380px">
<div class="a" style="left:0;top:.5px;width:37px;text-align:right;color:#2b91af;font-size:12.500px;white-space:pre">1
2
3
4
5
6
7
8
9
10
11
12
13
14
15
16
17
18
19
20
21
22
23
24
25
26
27
28
29
30
31
32
33
34
35</div>
<div class="a" style="left:76px;top:.5px;white-space:pre"><b style="color:#8c8c8c;letter-spacing:-.2px">#PVF_File</b>

<span style="color:#ee2e6b">[name]</span>
<span class="ar">⟶</span><span style="color:#a31515">`<span class="c">无影剑</span> - <span class="c">艾雷诺</span>`</span>

<span style="color:#ee2e6b">[name2]</span>
<span class="ar">⟶</span><span style="color:#a31515;letter-spacing:-.3px">`Shapeless Sword Elenore`</span>

<span style="color:#ee2e6b">[basic explain]</span>
<span class="ar">⟶</span><span style="color:#a31515">`<span class="c">攻击时，</span> <span class="c">附加</span>30%%<span class="c">的伤害。</span>`</span>

<span style="color:#ee2e6b">[detail explain]</span>
<span class="ar">⟶</span><span style="color:#a31515">`    <span class="c">攻击时，</span> <span class="c">附加</span>30%%<span class="c">的伤害。</span> (<span class="c">在决斗场中</span> +15%%)`</span>

<span style="color:#ee2e6b">[flavor text]</span>
<span class="ar">⟶</span><span style="color:#a31515">``</span>

<span style="color:#ee2e6b">[anti evil]</span>
<span class="ar">⟶</span><span style="color:#5b2da8">10</span>

<span style="color:#ee2e6b">[grade]</span>
<span class="ar">⟶</span><span style="color:#5b2da8">62</span>

<span style="color:#ee2e6b">[creation rate]</span>
<span class="ar">⟶</span><span style="color:#5b2da8">50</span>

<span style="color:#ee2e6b">[attach type]</span>
<span class="ar">⟶</span><span style="color:#a31515">`[trade]`</span>

<span style="color:#ee2e6b">[item group name]</span>
<span class="ar">⟶</span><span style="color:#a31515">`ssword`</span>

<span style="color:#ee2e6b">[rarity]</span>
<span class="ar">⟶</span><span style="color:#5b2da8">4</span>
</div>
</div>
<!-- editor vscroll -->
<div class="a" style="left:1239px;top:189px;width:22px;height:502px;background:#eeeef2"></div>
<div class="a" style="left:1239px;top:189px;width:22px;height:17px;background:#f5f5f7;border-bottom:1px solid #e0e0e6"></div>
<svg width="10" height="6" style="left:1245px;top:195px" fill="none" stroke="#555" stroke-width="1.200"><path d="M.5 5.500L5 1l4.500 4.500"/></svg>
<div class="a" style="left:1242px;top:207px;width:15px;height:94px;background:#cdd0de"></div>
<!-- editor bottom bar -->
<div class="a" style="left:349px;top:691px;width:912px;height:18px;background:#f5f5f7"></div>
<div class="t" style="left:371px;top:692px;font-size:12px">100 %</div>
<svg width="7" height="5" style="left:406px;top:698px"><path d="M0 0h7L3.500 4z" fill="#1e1e1e"/></svg>
<svg width="5" height="8" style="left:420px;top:696px"><path d="M4.500 0v8L0 4z" fill="#1e1e1e"/></svg>
<svg width="5" height="8" style="left:1043px;top:696px"><path d="M0 0v8L4.500 4z" fill="#1e1e1e"/></svg>
<div class="a" style="left:1059px;top:692px;width:39px;height:16px;background:#fff;border:1px solid #ccceDB"></div>
<div class="t" style="left:1063px;top:692px;font-size:11px">TW</div>
<svg width="7" height="5" style="left:1085px;top:698px"><path d="M0 0h7L3.500 4z" fill="#1e1e1e"/></svg>
<div class="t" style="left:1110px;top:692px;font-size:11px"><span class="c11"><span class="c">行：</span></span>0</div>
<div class="t" style="left:1153px;top:692px;font-size:11px"><span class="c11"><span class="c">列：</span></span>0</div>
<div class="t" style="left:1196px;top:692px;font-size:11px"><span class="c11"><span class="c">字符：</span></span>0</div>
<div class="a" style="left:1239px;top:691px;width:22px;height:18px;background:#f5f5f7;border-left:1px solid #e0e0e6"></div>
<svg width="10" height="6" style="left:1245px;top:698px" fill="none" stroke="#555" stroke-width="1.200"><path d="M.5 .5L5 5l4.500-4.500"/></svg>
<!-- right panel : find view -->
<svg width="0" height="0" style="left:0;top:0"><defs>
<symbol id="fol" viewBox="0 0 16 13"><path d="M.6 11.500V1.600Q.6 .6 1.600 .6H5.400L7 2.600H12.400Q13.400 2.600 13.400 3.600V6" fill="#fff" stroke="#dcb67a" stroke-width="1.200"/><path d="M2.600 6.200H15.600L13.600 12.400H.6z" fill="#dcb67a"/></symbol>
<symbol id="exp" viewBox="0 0 6 6"><path d="M6 0V6H0z" fill="#1e1e1e"/></symbol>
</defs></svg>
<div class="pan" style="left:1267px;top:139px;width:303px;height:570px"></div>
<div class="ph" style="left:1272px;top:142px"><span class="c">查找视图</span></div>
<div class="grip" style="left:1326px;top:148px;width:204px"></div>
<svg width="8" height="12" style="left:1538px;top:144px" fill="none" stroke="#1e1e1e" stroke-width="1"><path d="M1.500 .5h4v6h-4zM4.500 .5v6M0 6.500h7M3.500 6.500v5" /></svg>
<svg width="11" height="11" style="left:1553px;top:145px" fill="none" stroke="#1e1e1e" stroke-width="1.300"><path d="M1 1.500l8.500 8.500M9.500 1.500l-8.500 8.500"/></svg>
<div class="a" style="left:1268px;top:162px;width:301px;height:23px;background:#eeeef2"></div>
<svg width="6" height="18" style="left:1270px;top:165px"><path d="M0 .5h1M0 4.500h1M0 8.500h1M0 12.500h1M0 16.500h1M2 2.500h1M2 6.500h1M2 10.500h1M2 14.500h1M4 .5h1M4 4.500h1M4 8.500h1M4 12.500h1M4 16.500h1" stroke="#555" stroke-width="1"/></svg>
<svg width="15" height="15" style="left:1282px;top:166px" viewBox="0 0 15 15" fill="none"><circle cx="8.500" cy="3.800" r="3" stroke="#3c3c3c" stroke-width="1.100"/><path d="M10.500 6l3.200 3.500" stroke="#3c3c3c" stroke-width="1.300"/><path d="M3.500 7v6M.8 10.300L3.500 13.300 6.200 10.300" stroke="#1f65c0" stroke-width="1.400"/></svg>
<div class="sep" style="left:1306px;top:164px;height:19px"></div>
<svg width="14" height="15" style="left:1315px;top:165px" viewBox="0 0 14 15" fill="none"><path d="M2.500 7.500v6.500h10V4.500l-3-3H6.500" stroke="#3c3c3c" stroke-width="1.100"/><path d="M9.500 1.500v3h3" stroke="#3c3c3c" stroke-width="1"/><path d="M3.500 .5v5.500M1 3.500L3.500 6.200 6 3.500" stroke="#1f65c0" stroke-width="1.300"/></svg>
<div class="sep" style="left:1338px;top:164px;height:19px"></div>
<svg width="14" height="15" style="left:1348px;top:166px" viewBox="0 0 14 15"><path d="M4.500 5.500h9L10 9.500v4.500H8V9.500z" fill="#2b2b2b"/><path d="M.8 1.200C3 .2 5 1.500 4.800 4M2.800 3.300L4.900 4.800 6.200 2.500" fill="none" stroke="#1f65c0" stroke-width="1.300"/></svg>
<svg width="16" height="15" style="left:1371px;top:166px" viewBox="0 0 16 15"><path d="M7 6.500a4 1.700 0 0 1 8 0v5.500a4 1.700 0 0 1-8 0z" fill="#2b2b2b"/><ellipse cx="11" cy="6.300" rx="3.200" ry="1" fill="#555"/><path d="M1.200 5.500C.5 2.800 2.500 1.200 5.500 1.800M4 0L6.200 1.900 4.200 4" fill="none" stroke="#1f65c0" stroke-width="1.300"/></svg>
<div class="sep" style="left:1395px;top:164px;height:19px"></div>
<svg width="13" height="12" style="left:1406px;top:168px" fill="none" stroke="#6a6a6a" stroke-width="1"><path d="M4.500 2.500V.5h8v7h-2M2.500 4.500V2.500h8v7h-2"/><rect x=".5" y="4.500" width="8" height="7" fill="#eeeef2"/><path d="M3 8h3" stroke="#1f65c0" stroke-width="1.300"/></svg>
<svg width="11" height="10" style="left:1427px;top:169px"><path d="M.7 0v10M9.800 0v10" stroke="#777" stroke-width="1.400"/><path d="M3 1.500L8 5 3 8.500z" fill="#1f65c0"/></svg>
<div class="t" style="left:1445px;top:167px"><span class="c">宏</span></div>
<svg width="8" height="5" style="left:1464px;top:172px"><path d="M0 0h8L4 4.500z" fill="#1e1e1e"/></svg>
<div class="sep" style="left:1481px;top:164px;height:19px"></div>
<svg width="16" height="13" style="left:1490px;top:166px"><path d="M.5 .5l4.500 5M5 .5l-4.500 5" stroke="#d0211c" stroke-width="1.300"/><path d="M6 3h10M6 6.200h10M0 9.300h16M0 12.500h16" stroke="#2b2b2b" stroke-width="1.300"/></svg>
<div class="a" style="left:1268px;top:185px;width:301px;height:22px;background:#fff;border-top:1px solid #ccceDB;border-bottom:1px solid #ccceDB"></div>
<div class="t" style="left:1272px;top:189px"><span class="c">无影剑</span></div>
<div class="t" style="left:1455px;top:189px;color:#8a8a8a;letter-spacing:.4px">Count:  5</div>
<svg width="8" height="5" style="left:1518px;top:195px"><path d="M0 0h8L4 4.500z" fill="#1e1e1e"/></svg>
<svg width="15" height="15" style="left:1533px;top:189px" viewBox="0 0 15 15" fill="none"><path d="M5.500 7v7h8.500V6l-2.500-2.500H9" stroke="#2b2b2b" stroke-width="1.100"/><path d="M3.500 .5v6M.5 3.500h6M1.300 1.300l4.400 4.400M5.700 1.300L1.300 5.700" stroke="#d98a2b" stroke-width="1"/></svg>
<svg width="9" height="9" style="left:1555px;top:192px"><path d="M.5 .5l8 8M8.500 .5l-8 8" stroke="#ff5aa5" stroke-width="1.500"/></svg>
<div class="a" id="rtree" style="left:1268px;top:207px;width:301px;height:484px;background:#fff;overflow:hidden">
<svg width="6" height="6" style="left:6.3px;top:7px"><use href="#exp"/></svg><svg width="16" height="13" style="left:19.8px;top:3px"><use href="#fol"/></svg><div class="t" style="left:50.3px;top:2.5px">equipment</div>
<svg width="6" height="6" style="left:26.3px;top:27px"><use href="#exp"/></svg><svg width="16" height="13" style="left:39.8px;top:23px"><use href="#fol"/></svg><div class="t" style="left:70.3px;top:22.5px">character</div>
<svg width="6" height="6" style="left:46.3px;top:47px"><use href="#exp"/></svg><svg width="16" height="13" style="left:59.8px;top:43px"><use href="#fol"/></svg><div class="t" style="left:90.3px;top:42.5px">swordman</div>
<svg width="6" height="6" style="left:66.3px;top:67px"><use href="#exp"/></svg><svg width="16" height="13" style="left:79.8px;top:63px"><use href="#fol"/></svg><div class="t" style="left:110.3px;top:62.5px">weapon</div>
<svg width="6" height="6" style="left:86.3px;top:87px"><use href="#exp"/></svg><svg width="16" height="13" style="left:99.8px;top:83px"><use href="#fol"/></svg><div class="t" style="left:130.3px;top:82.5px">ssword</div>
<svg width="14" height="14" style="left:119.6px;top:103px"><use href="#scr"/></svg><div class="t" style="left:142.7px;top:102.5px;color:#ffa500"><span class="c">寂灭㊣无影剑</span> - <span class="c">艾格斯</span></div><div class="t" style="left:269px;top:102.5px">11549.equ</div>
<svg width="19" height="19" style="left:119.600px;top:120.500px"><use href="#scb"/></svg><div class="t" style="left:146.6px;top:122.5px;color:#ffa500"><span class="c">封</span>·<span class="c">无影剑</span>-<span class="c">艾格斯</span></div><div class="t" style="left:244px;top:122.5px">4600555.equ</div>
<div class="a" style="left:0;top:140px;width:301px;height:20px;background:#d6d6d8"></div>
<svg width="14" height="14" style="left:119.6px;top:143px"><use href="#scr"/></svg><div class="t" style="left:142.7px;top:142.5px;color:#ffa500"><span class="c">无影剑</span> - <span class="c">艾雷诺</span></div><div class="t" style="left:233px;top:142.5px">n_sswd_eleno.equ</div>
<svg width="6" height="6" style="left:6.3px;top:167px"><use href="#exp"/></svg><svg width="16" height="13" style="left:19.8px;top:163px"><use href="#fol"/></svg><div class="t" style="left:50.3px;top:162.5px">etc</div>
<svg width="6" height="6" style="left:26.3px;top:187px"><use href="#exp"/></svg><svg width="16" height="13" style="left:39.8px;top:183px"><use href="#fol"/></svg><div class="t" style="left:70.3px;top:182.5px">itemdictionary</div>
<svg width="14" height="14" style="left:60.0px;top:203px"><use href="#scr"/></svg><div class="t" style="left:88px;top:202.5px">(r)itemdictionary.etc</div>
<svg width="6" height="6" style="left:6.3px;top:227px"><use href="#exp"/></svg><svg width="16" height="13" style="left:19.8px;top:223px"><use href="#fol"/></svg><div class="t" style="left:50.3px;top:222.5px">stackable</div>
<svg width="6" height="6" style="left:26.3px;top:247px"><use href="#exp"/></svg><svg width="16" height="13" style="left:39.8px;top:243px"><use href="#fol"/></svg><div class="t" style="left:70.3px;top:242.5px">recipe</div>
<svg width="14" height="14" style="left:60.0px;top:263px"><use href="#scr"/></svg><div class="t" style="left:83.3px;top:262.5px;color:#ffa500"><span class="c">寂灭㊣无影剑</span> - <span class="c">艾格斯</span> <span class="c">设计图</span></div><div class="t" style="left:248px;top:262.5px">97980003.stk</div>
</div>
<!-- right hscroll -->
<div class="a" style="left:1268px;top:691px;width:301px;height:17px;background:#f5f5f7"></div>
<svg width="5" height="8" style="left:1273px;top:696px"><path d="M4.500 0v8L0 4z" fill="#1e1e1e"/></svg>
<svg width="5" height="8" style="left:1559px;top:696px"><path d="M0 0v8L4.500 4z" fill="#1e1e1e"/></svg>
<div class="a" style="left:1284px;top:695px;width:72px;height:10px;background:#c8cad8"></div>
<!-- output panel -->
<div class="pan" style="left:41px;top:715px;width:1529px;height:189px"></div>
<div class="ph" style="left:46px;top:718px"><span class="c">输出</span></div>
<div class="grip" style="left:76px;top:724px;width:1450px"></div>
<svg width="8" height="12" style="left:1538px;top:720px" fill="none" stroke="#1e1e1e" stroke-width="1"><path d="M1.500 .5h4v6h-4zM4.500 .5v6M0 6.500h7M3.500 6.500v5" /></svg>
<svg width="11" height="11" style="left:1553px;top:721px" fill="none" stroke="#1e1e1e" stroke-width="1.300"><path d="M1 1.500l8.500 8.500M9.500 1.500l-8.500 8.500"/></svg>
<div class="a" style="left:42px;top:737px;width:1527px;height:23px;background:#eeeef2"></div>
<svg width="6" height="18" style="left:44px;top:739px"><path d="M0 .5h1M0 4.500h1M0 8.500h1M0 12.500h1M0 16.500h1M2 2.500h1M2 6.500h1M2 10.500h1M2 14.500h1M4 .5h1M4 4.500h1M4 8.500h1M4 12.500h1M4 16.500h1" stroke="#555" stroke-width="1"/></svg>
<svg width="15" height="14" style="left:57px;top:741px"><path d="M.5 .5l4.500 4.500M5 .5L.5 5" stroke="#d0211c" stroke-width="1.300"/><path d="M7 1.500h7M7 4.500h7M0 8h14M0 11h14M0 13.500h14" stroke="#555" stroke-width="1.200"/></svg>
<svg width="15" height="13" style="left:80px;top:741px"><text x="0" y="5.500" font-size="7" font-weight="bold" fill="#222" font-family="'Liberation Sans',sans-serif">ab</text><text x="0" y="11" font-size="6" font-weight="bold" fill="#222" font-family="'Liberation Sans',sans-serif">c</text><path d="M10 3.500h3.500v6H6M8.500 7L5.800 9.500 8.500 12" fill="none" stroke="#1f65c0" stroke-width="1.300"/></svg>
<div class="a" id="log" style="left:42px;top:760px;width:1511px;height:122px;background:#fff;overflow:hidden">
<div class="t lg" style="top:-6.500px"><i>22:25:36 </i><span style="color:#008a00">Success<span class="c">：</span>HTTP<span class="c">服务</span> :: <span class="c">服务已启动在</span> 27000 <span class="c">端口</span>,<span class="c">支持第三方访问</span>,<span class="c">打开多个软件端口会变化</span>,<span class="c">请注意</span></span></div>
<div class="t lg" style="top:9.500px"><i>22:25:37 </i><span class="bg" style="color:#cc3a3a;letter-spacing:-.03px">Error<span class="c">：云端数据获取失败：</span>The request was canceled due to the configured HttpClient.Timeout of 100 seconds elapsing.</span></div>
<div class="t lg" style="top:25.500px"><i>22:26:16 </i><span class="bg" style="color:#b5a55a;letter-spacing:.09px">Warning<span class="c">：</span>Pvf<span class="c">封包载入中：</span>D:\BaiduNetdiskDownload\<span class="c">龙服第二季</span>\<span class="c">龙服第二季配套</span>\<span class="c">龙服第二季第一版</span>\Script.pvf</span></div>
<div class="t lg" style="top:41.500px"><i>22:26:23 </i><span style="color:#008a00">Success<span class="c">：</span>StringTable :: stringtable.bin <span class="c">成功以编码</span>TW<span class="c">载入</span></span></div>
<div class="t lg" style="top:57px"><i>22:26:25 </i><span style="color:#008a00">Success<span class="c">：字符串链接</span> :: <span class="c">成功载入</span>26<span class="c">个</span>Str<span class="c">文件。</span></span></div>
<div class="t lg" style="top:72.500px"><i>22:26:28 </i><span style="color:#008a00">Success<span class="c">：套装数量：</span>516</span></div>
<div class="t lg" style="top:88.500px"><i>22:26:54 </i><span style="color:#008a00">Success<span class="c">：查找完毕，找到</span>5<span class="c">个文件。</span></span></div>
</div>
<!-- output vscroll -->
<div class="a" style="left:1553px;top:760px;width:16px;height:122px;background:#f5f5f7"></div>
<svg width="8" height="5" style="left:1557px;top:765px"><path d="M0 4.500h8L4 0z" fill="#1e1e1e"/></svg>
<svg width="8" height="5" style="left:1557px;top:870px"><path d="M0 0h8L4 4.500z" fill="#1e1e1e"/></svg>
<div class="a" style="left:1556px;top:791px;width:10px;height:72px;background:#c8cad8"></div>
<!-- output tabs -->
<div class="a" style="left:42px;top:882px;width:1527px;height:21px;background:#eeeef2"></div>
<div class="a" style="left:42px;top:881px;width:35px;height:22px;background:#f5f5f7;border-right:1px solid #ccceDB"></div>
<div class="t" style="left:47px;top:885px;color:#0e70c0"><span class="c">输出</span></div>
<div class="t" style="left:83px;top:885px"><span class="c">错误列表</span></div>
<div class="t" style="left:143px;top:885px"><span class="c">编辑器查找结果</span></div>
<!-- status bar -->
<div class="a" style="left:38px;top:909px;width:1534px;height:28px;background:#007acc"></div>
<div class="t w" style="left:42px;top:915px;font-size:12.300px"><span class="k" style="font-size:12px"><span class="c">文件数：</span></span>524473</div>
<div class="a" style="left:136px;top:912px;width:1px;height:22px;background:#2a8fd6"></div>
<svg width="22" height="24" style="left:143px;top:910px" viewBox="0 0 22 24"><path d="M11 2.500L21 12.500 11 22.500 1 12.500z" fill="#f4f4f4" stroke="#4a4a4a" stroke-width="1.100"/><path d="M7.500 12l2-2 5 5-2 2zM11 8.500l1.500-1.500 5 5-1.500 1.500zM5 12.500l1.500-1.500M9 17l1.500 1.500" stroke="#333" stroke-width="1.200" fill="none"/><path d="M7 1.500l5 5M12 1.500l-5 5" stroke="#2f9e2f" stroke-width="2"/></svg>
<div class="t w" style="left:169px;top:915px">API<span class="c">端口：</span></div>
<div class="a" style="left:222px;top:913px;width:80px;height:19px;background:#fff"></div>
<div class="t" style="left:229px;top:916px;font-size:12px">27000</div>
<svg width="14" height="12" style="left:270px;top:917px" fill="none" stroke="#555" stroke-width="1"><rect x=".5" y="4.500" width="7" height="7" stroke-dasharray="2 1"/><path d="M5.500 3.500V.5h8v8h-3M8 6l4-4M9 1.500h3.500V5"/></svg>
<svg width="12" height="10" style="left:287px;top:917px" fill="none" stroke="#1e1e1e" stroke-width="1.600"><path d="M1 5l3.500 3.500L11 1"/></svg>
<div class="a" style="left:310px;top:912px;width:1px;height:22px;background:#2a8fd6"></div>
<div class="t w" style="left:319px;top:915px;font-size:12.500px">ImagePacks2<span class="c">：</span></div>
<div class="a" style="left:400px;top:913px;width:500px;height:19px;background:#fff"></div>
<div class="t" style="left:759px;top:915px;color:#8a8a8a;font-size:12px">Img<span class="c">总数：</span>0</div>
<svg width="20" height="19" style="left:825px;top:913px"><rect x="0" y="0" width="20" height="19" fill="#1478d0"/><path d="M4.500 4.500h2M4.500 9.500h2M4.500 14.500h2" stroke="#0a2540" stroke-width="2"/><path d="M8 4.500h8M8 9.500h8M8 14.500h8" stroke="#0a2540" stroke-width="1"/></svg>
<svg width="16" height="17" style="left:847px;top:914px" viewBox="0 0 16 17"><path d="M7 1c1 2.500 4.500 4 5 8 .8-1 1.200-2.500 1-4 2.500 3.500 2 8.500-1.500 10.500-3 1.700-7.500.8-9-2.500C1 9.500 3 7.500 4 5c.6 1 1 2 1 3 1.500-2 2.500-4 2-7z" fill="#e05a4f" stroke="#9c2a22" stroke-width=".8"/><path d="M8 8c.5 2 2.500 2.500 2 5-.3 1.200-1.500 2-2.800 1.800C5.500 14.500 5 13 5.500 11.500 6 10.200 7.600 9.800 8 8z" fill="#f7b7ae"/></svg>
<svg width="11" height="11" style="left:869px;top:917px"><path d="M1 1l8.500 8.500M9.500 1L1 9.500" stroke="#c8321e" stroke-width="1.500"/></svg>
<svg width="12" height="4" style="left:885px;top:921px"><path d="M0 1.500h2M4.500 1.500h2M9 1.500h2" stroke="#111" stroke-width="2"/></svg>
<div class="a" style="left:908px;top:912px;width:1px;height:22px;background:#2a8fd6"></div>
<svg width="16" height="12" style="left:917px;top:917px"><rect x=".5" y=".5" width="15" height="11" rx="2" fill="#c2185b"/><rect x="3.500" y="3.500" width="9" height="5" fill="none" stroke="#fff" stroke-width="1.600"/></svg>
<div class="t w" style="left:935px;top:915px"><span class="c">释放内存</span></div>
<div class="t w" style="left:991px;top:915px;font-size:12px">Test</div>
<svg width="10" height="10" style="left:1560px;top:925px"><path d="M9 0v1M9 3v1M6 3v1M9 6v1M6 6v1M3 6v1M9 9v1M6 9v1M3 9v1M0 9v1" stroke="#cfe4f5" stroke-width="1.500"/></svg>
<div class="t k" style="left:1476px;top:926px;font-size:20px;line-height:24px;height:24px;color:#b3b3b3;font-weight:300;font-family:'Liberation Sans','Noto Sans CJK SC',sans-serif;letter-spacing:.3px"><span class="c">激活</span> Wind</div>
<!-- item tooltip -->
<div class="a" id="tip" style="left:953px;top:-1px;width:283px;height:367px;background:rgba(0,0,0,.92);border:1px solid #1a6fc4;font-family:'Liberation Serif','Noto Serif CJK SC',serif;font-weight:bold;font-size:13px;color:#fff">
<div class="a" style="left:1px;top:0;width:280px;height:365px">
 <div class="a" style="left:8px;top:2px;width:26px;height:26px;border:1px solid #b8b8b8;border-radius:4px;background:#1c1c1c"></div>
 <svg width="20" height="20" style="left:11px;top:5px" viewBox="0 0 20 20" fill="none" stroke="#eee" stroke-width="1.300"><path d="M4.500 14V3.500Q4.500 2 6 2H15.500"/><path d="M5 2.500H13.500V15Q13.500 17 12 17H5z" fill="#d8d8d8" stroke="none"/><path d="M14 6V15.500Q14 17.500 12 17.500H3"/><circle cx="15.800" cy="4" r="1.800" fill="#1c1c1c"/><rect x="1.500" y="13.500" width="10" height="4" rx="2" fill="#1c1c1c"/></svg>
 <div class="tt k" style="left:41px;top:7px;color:#ffa500;font-size:13.500px;letter-spacing:.2px"><span class="c">无影剑</span> — <span class="c">艾雷诺</span></div>
 <div class="hr" style="top:39px"></div>
 <div class="tt r k" style="top:48px;color:#ffa500;font-size:13.500px"><span class="c">史诗</span></div>
 <div class="tt r" style="top:62px">[<span class="c">透明的宇宙灵魂</span>]2900<span class="c">个</span></div>
 <div class="tt" style="left:5px;top:76px;font-size:10px">3.1kg</div>
 <div class="tt r" style="top:76px">14080<span class="c">金币</span></div>
 <div class="tt r" style="top:89px"><span class="c">武器</span></div>
 <div class="tt" style="left:5px;top:102px"><span class="c">可用职业：鬼剑士</span>,<span class="c">黑暗武士</span>,<span class="c">缔造者</span></div>
 <div class="tt" style="left:5px;top:115px"><span class="c">耐久度</span> 35/35</div>
 <div class="tt r" style="top:115px;color:#ff1a1a"><span class="c">不可交易</span></div>
 <div class="tt" style="left:5px;top:128px;color:#ff1a1a">lv 50<span class="c">以上可以使用</span></div>
 <div class="tt r" style="top:128px;color:#ffff00"><span class="c">最上级</span></div>
 <div class="tt" style="left:5px;top:151px"><span class="c">物理攻击力</span> +505</div>
 <div class="tt" style="left:5px;top:164px"><span class="c">魔法攻击力</span> +612</div>
 <div class="tt" style="left:5px;top:177px"><span class="c">独立攻击力</span> +328</div>
 <div class="tt" style="left:5px;top:191px"><span class="c">智力</span> +39</div>
 <div class="tt" style="left:5px;top:204px"><span class="c">抗魔值</span> +10</div>
 <div class="hr" style="top:231px"></div>
 <div class="tt" style="left:5px;top:233px;color:#68d5ed"><span class="c">释放速度</span> +2%</div>
 <div class="tt" style="left:5px;top:246px;color:#68d5ed"><span class="c">物理暴击率</span> +2%</div>
 <div class="tt" style="left:5px;top:259px;color:#68d5ed"><span class="c">魔法暴击率</span> +2%</div>
 <div class="tt" style="left:5px;top:284px;color:#68d5ed"><span class="c">攻击时，</span> <span class="c">附加</span>30%%<span class="c">的伤害。</span></div>
 <div class="hr" style="top:307px"></div>
 <div class="hr" style="top:338px"></div>
 <div class="tt" style="left:0;width:280px;text-align:center;top:346px;color:#68d5ed"><span class="c">查看详细说明</span>(F4)</div>
</div>
</div>
<!-- IME floating bar -->
<div class="a" style="left:1514px;top:163px;width:60px;height:28px;background:#fff;border:1px solid #cfe0fb"></div>
<svg width="30" height="34" style="left:1499px;top:160px" viewBox="0 0 30 34"><defs><linearGradient id="im" x1="0" y1="0" x2="0" y2="1"><stop offset="0" stop-color="#2a6df5"/><stop offset="1" stop-color="#3fb0ff"/></linearGradient></defs><path d="M15 2a13.500 14.500 0 1 1-1 29c-1.500 1-3 1.500-5 1.500 1-.8 1.600-1.800 1.800-3A14.500 14.500 0 0 1 15 2z" fill="url(#im)"/></svg>
<div class="t k" style="left:1506px;top:169px;color:#fff;font-weight:900;font-size:15px;font-family:'Noto Sans CJK SC',sans-serif;transform:scaleX(1.1);transform-origin:0 0"><span class="c">王</span></div>
<div class="t k" style="left:1535px;top:169px;color:#1f6fe8;font-weight:bold;font-size:16px"><span class="c">中</span></div>
<div class="t k" style="left:1558px;top:165px;color:#1f6fe8;font-weight:bold;font-size:16px">°,</div>
</body>
</html>
